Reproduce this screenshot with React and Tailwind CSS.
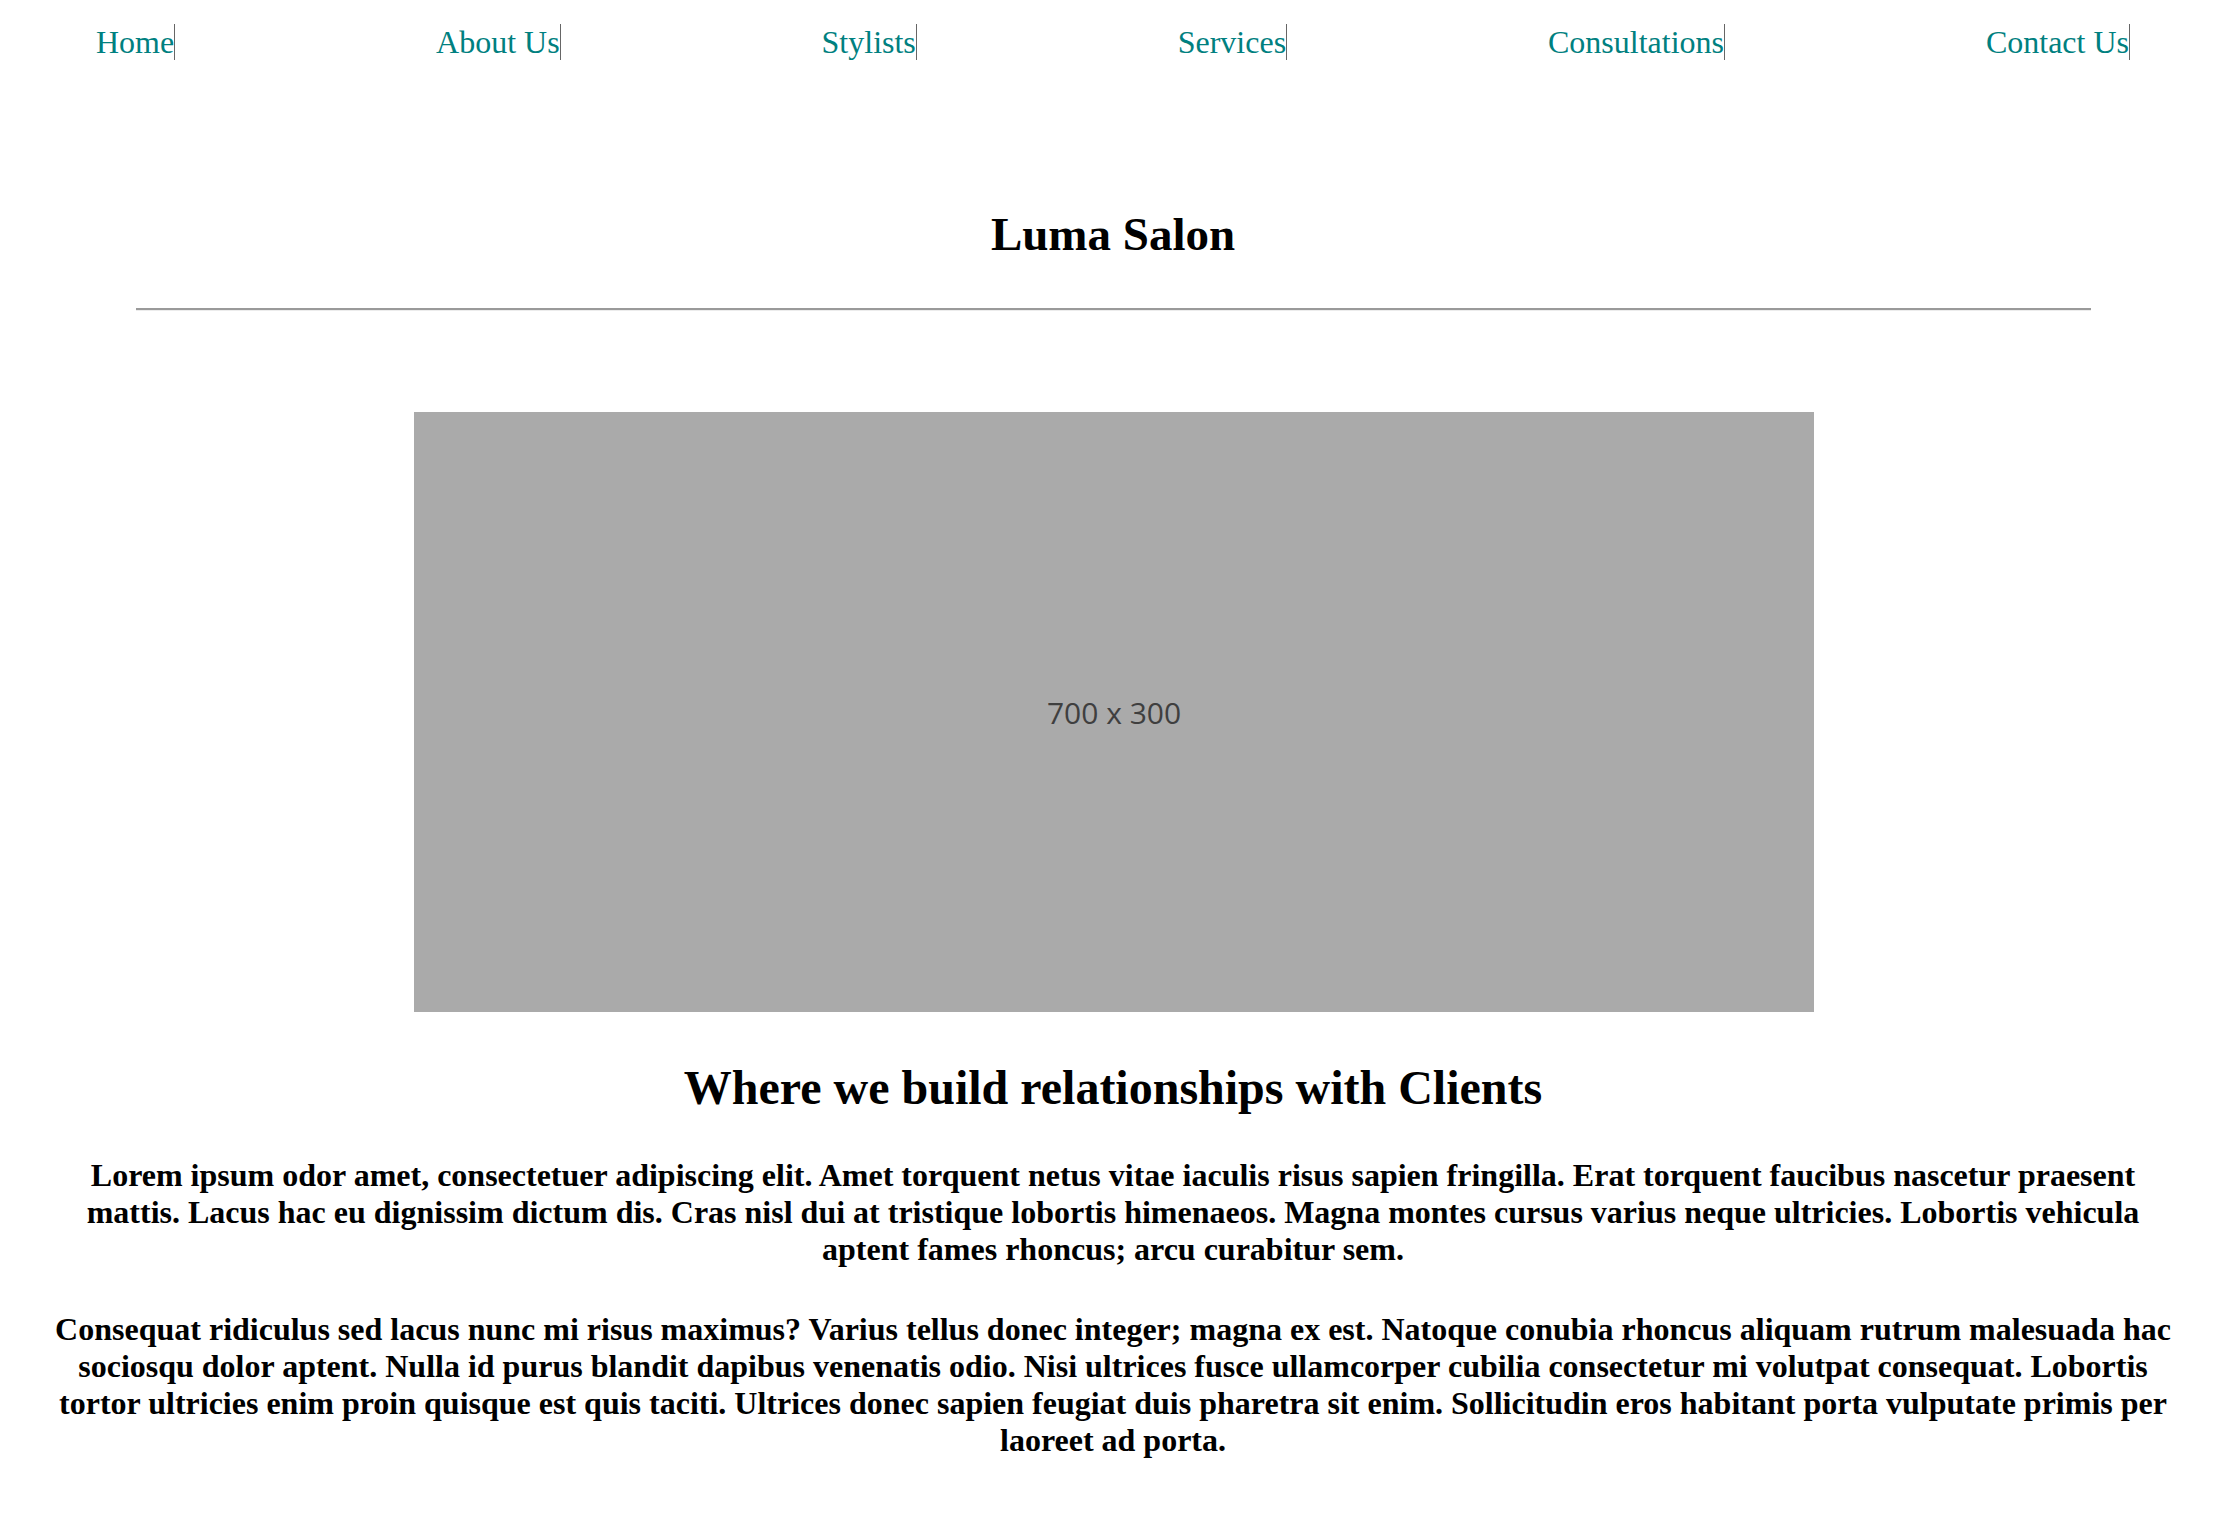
import React from 'react';

const navLinks = ['Home', 'About Us', 'Stylists', 'Services', 'Consultations', 'Contact Us'];

const paragraphs = [
  'Lorem ipsum odor amet, consectetuer adipiscing elit. Amet torquent netus vitae iaculis risus sapien fringilla. Erat torquent faucibus nascetur praesent mattis. Lacus hac eu dignissim dictum dis. Cras nisl dui at tristique lobortis himenaeos. Magna montes cursus varius neque ultricies. Lobortis vehicula aptent fames rhoncus; arcu curabitur sem.',
  'Consequat ridiculus sed lacus nunc mi risus maximus? Varius tellus donec integer; magna ex est. Natoque conubia rhoncus aliquam rutrum malesuada hac sociosqu dolor aptent. Nulla id purus blandit dapibus venenatis odio. Nisi ultrices fusce ullamcorper cubilia consectetur mi volutpat consequat. Lobortis tortor ultricies enim proin quisque est quis taciti. Ultrices donec sapien feugiat duis pharetra sit enim. Sollicitudin eros habitant porta vulputate primis per laoreet ad porta.',
];

export default function App() {
  return (
    <div className="min-h-screen bg-white text-black font-['Liberation_Serif','Times_New_Roman',serif]">
      {/* Top navigation */}
      <nav className="flex justify-between px-[96px] pt-[24px]">
        {navLinks.map((link) => (
          <a
            key={link}
            href="#"
            className="inline-block border-r border-[#666] text-[32px] leading-[36px] text-[#008080]"
          >
            {link}
          </a>
        ))}
      </nav>

      <header className="mt-[147px] text-center">
        <h1 className="text-[47px] font-bold leading-[55px]">Luma Salon</h1>
        <hr className="mx-auto mt-[46px] w-[1955px] border-0 border-t-2 border-b border-t-[#9a9a9a] border-b-[#ececec]" />
      </header>

      <main className="flex flex-col items-center">
        {/* Placeholder hero image */}
        <div className="ml-[2px] mt-[101px] flex h-[600px] w-[1400px] items-center justify-center bg-[#aaaaaa]">
          <span className="font-['Open_Sans','DejaVu_Sans',sans-serif] text-[30px] text-[#3f3f3f]">700 x 300</span>
        </div>

        <h2 className="mt-[48px] text-center text-[48px] font-bold leading-[55px]">
          Where we build relationships with Clients
        </h2>

        <section className="mt-[42px] w-full px-[48px] text-center text-[32px] font-bold leading-[36.8px]">
          {paragraphs.map((p, i) => (
            <p key={i} className={i > 0 ? 'mt-[44px]' : ''}>
              {p}
            </p>
          ))}
        </section>
      </main>
    </div>
  );
}
